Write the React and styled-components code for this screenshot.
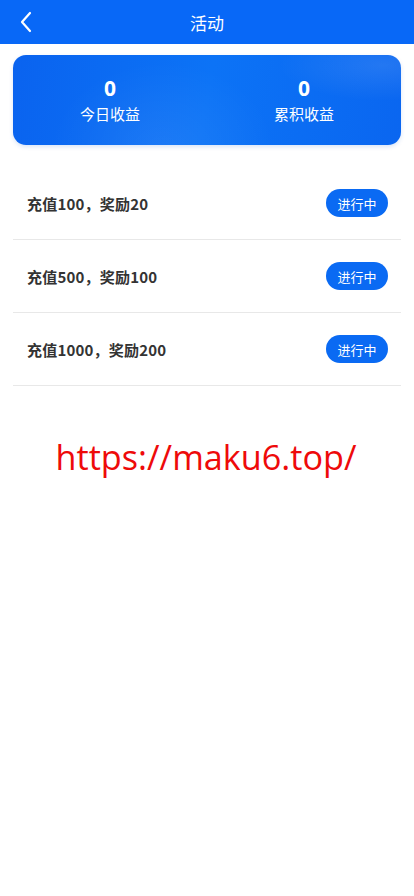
import React from "react";
import styled, { createGlobalStyle } from "styled-components";

const Global = createGlobalStyle`
  html, body { margin: 0; padding: 0; background: #fff; }
  body { font-family: "Noto Sans CJK SC", "Noto Sans", sans-serif; }
`;

const Page = styled.div`
  width: 414px;
  min-height: 896px;
  background: #fff;
  display: flex;
  flex-direction: column;
`;

const Header = styled.header`
  height: 44px;
  background: #0868f7;
  display: flex;
  align-items: center;
  justify-content: center;
  position: relative;
  color: #fff;
  font-size: 17px;
`;

const Back = styled.button`
  position: absolute;
  left: 14px;
  top: 10px;
  background: none;
  border: 0;
  padding: 0;
  width: 24px;
  height: 24px;
  display: flex;
  align-items: center;
  justify-content: center;
`;

const Body = styled.main`
  padding: 11px 13px 0;
  display: flex;
  flex-direction: column;
`;

const Card = styled.section`
  height: 90px;
  border-radius: 13px;
  background:
    radial-gradient(ellipse 130px 45px at 370px 10px, rgba(255,255,255,0.10), transparent 80%),
    radial-gradient(ellipse 140px 110px at 150px 95px, rgba(255,255,255,0.07), transparent 80%),
    linear-gradient(100deg, #0a63ef 0%, #0c73f6 50%, #0a66f0 100%);
  display: grid;
  grid-template-columns: 1fr 1fr;
  align-items: center;
  color: #fff;
  box-shadow: 0 2px 4px rgba(10, 80, 200, 0.15);
`;

const Stat = styled.div`
  display: flex;
  flex-direction: column;
  align-items: center;
`;

const StatValue = styled.div`
  font-family: "Open Sans", "Noto Sans", sans-serif;
  font-weight: 700;
  font-size: 21px;
  line-height: 26px;
`;

const StatLabel = styled.div`
  font-size: 15px;
  line-height: 22px;
  margin-top: 2px;
`;

const List = styled.ul`
  list-style: none;
  margin: 22px 0 0;
  padding: 0;
`;

const Row = styled.li`
  height: 72px;
  border-bottom: 1px solid #e8e8e8;
  display: flex;
  align-items: center;
  justify-content: space-between;
  padding: 0 13px 0 14px;
`;

const RowTitle = styled.span`
  font-size: 15px;
  font-weight: 700;
  color: #333;
  letter-spacing: 0.2px;
  font-family: "Noto Sans CJK SC", "Open Sans", sans-serif;
`;

const Badge = styled.span`
  width: 62px;
  height: 28px;
  border-radius: 14px;
  background: #0a6af3;
  color: #fff;
  font-size: 13px;
  display: flex;
  align-items: center;
  justify-content: center;
`;

const Watermark = styled.div`
  margin-top: 46px;
  text-align: center;
  color: #ee0a0a;
  font-family: "Open Sans", "Noto Sans", sans-serif;
  font-size: 34.2px;
  line-height: 50px;
  padding-right: 2px;
`;

const items = [
  "充值100，奖励20",
  "充值500，奖励100",
  "充值1000，奖励200",
];

export default function App() {
  return (
    <Page>
      <Global />
      <Header>
        <Back aria-label="返回">
          <svg width="14" height="22" viewBox="0 0 14 22" fill="none">
            <path d="M11 2 L3 11 L11 20" stroke="#fff" strokeWidth="2.2" strokeLinecap="round" strokeLinejoin="round" />
          </svg>
        </Back>
        活动
      </Header>
      <Body>
        <Card>
          <Stat>
            <StatValue>0</StatValue>
            <StatLabel>今日收益</StatLabel>
          </Stat>
          <Stat>
            <StatValue>0</StatValue>
            <StatLabel>累积收益</StatLabel>
          </Stat>
        </Card>
        <List>
          {items.map(t => (
            <Row key={t}>
              <RowTitle>{t}</RowTitle>
              <Badge>进行中</Badge>
            </Row>
          ))}
        </List>
        <Watermark>https://maku6.top/</Watermark>
      </Body>
    </Page>
  );
}
